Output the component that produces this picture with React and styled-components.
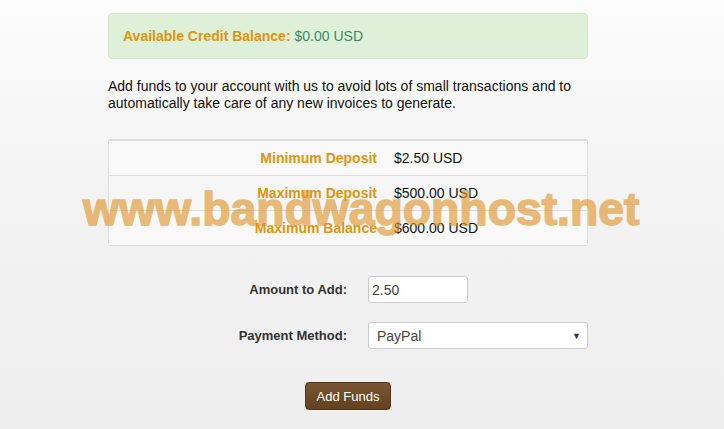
import styled, { createGlobalStyle } from "styled-components";

const GlobalStyle = createGlobalStyle`
  html, body {
    margin: 0;
    padding: 0;
  }
  body {
    font-family: "Liberation Sans", Arial, sans-serif;
    font-size: 14px;
    color: #111;
    background: linear-gradient(to bottom, #fcfcfc 0%, #f3f3f3 45%, #eeeeee 100%);
    min-height: 429px;
  }
`;

const Page = styled.div`
  position: relative;
  width: 724px;
  height: 429px;
  overflow: hidden;
`;

const Content = styled.div`
  width: 480px;
  margin: 0 auto 0 108px;
  padding-top: 13px;
`;

const Alert = styled.div`
  background: #dff0d8;
  border: 1px solid #d6e9c6;
  border-radius: 4px;
  height: 44px;
  padding: 0 14px;
  display: flex;
  align-items: center;
  font-size: 14px;
`;

const AlertLabel = styled.strong`
  color: #e0940f;
  margin-right: 4px;
`;

const AlertValue = styled.span`
  color: #3c8a6a;
`;

const Intro = styled.p`
  margin: 19px 0 0;
  line-height: 16.5px;
  font-size: 14px;
  color: #111;
`;

const Table = styled.div`
  margin-top: 28px;
  border: 1px solid #dddddd;
  border-top: 2px solid #dcdcdc;
  border-radius: 3px;
  background: #f9f9f9;
`;

const Row = styled.div`
  display: grid;
  grid-template-columns: 277px 1fr;
  height: 34px;
  align-items: center;
  border-top: ${(p) => (p.$first ? "none" : "1px solid #dddddd")};
  background: ${(p) => (p.$alt ? "#f6f6f6" : "#f9f9f9")};
`;

const RowLabel = styled.div`
  text-align: right;
  font-weight: bold;
  color: #e0940f;
  padding-right: 9px;
`;

const RowValue = styled.div`
  padding-left: 8px;
  color: #111;
`;

const Form = styled.div`
  margin-top: 30px;
  display: grid;
  grid-template-columns: 260px 1fr;
  row-gap: 19px;
  align-items: center;
`;

const FieldLabel = styled.label`
  text-align: right;
  font-weight: bold;
  font-size: 13px;
  color: #333;
  padding-right: 21px;
`;

const Input = styled.div`
  box-sizing: border-box;
  width: ${(p) => p.$width}px;
  height: 27px;
  background: #fff;
  border: 1px solid #cccccc;
  border-radius: 3px;
  display: flex;
  align-items: center;
  justify-content: space-between;
  padding: 0 6px 0 ${(p) => p.$pad}px;
  font-size: 14px;
  color: #444;
`;

const Caret = styled.span`
  font-size: 9px;
  color: #333;
`;

const Actions = styled.div`
  display: flex;
  justify-content: center;
  margin-top: 33px;
`;

const Button = styled.button`
  width: 86px;
  height: 28px;
  border: 1px solid #4e3419;
  border-radius: 4px;
  background: linear-gradient(to bottom, #7a5534 0%, #62421f 100%);
  color: #fff;
  font-family: "Liberation Sans", Arial, sans-serif;
  font-size: 13px;
  padding: 0;
  cursor: pointer;
`;

const Watermark = styled.div`
  position: absolute;
  left: 83px;
  top: 183px;
  font-family: "Liberation Sans", Arial, sans-serif;
  font-weight: bold;
  font-size: 46.3px;
  line-height: 52px;
  color: #e0962c;
  -webkit-text-stroke: 1.6px #e0962c;
  opacity: 0.63;
  white-space: nowrap;
  pointer-events: none;
`;

const limits = [
  { label: "Minimum Deposit", value: "$2.50 USD" },
  { label: "Maximum Deposit", value: "$500.00 USD" },
  { label: "Maximum Balance", value: "$600.00 USD" },
];

export default function App() {
  return (
    <>
      <GlobalStyle />
      <Page>
        <Content>
          <Alert>
            <AlertLabel>Available Credit Balance:</AlertLabel>
            <AlertValue>$0.00 USD</AlertValue>
          </Alert>
          <Intro>
            Add funds to your account with us to avoid lots of small transactions and to
            automatically take care of any new invoices to generate.
          </Intro>
          <Table>
            {limits.map((row, i) => (
              <Row key={row.label} $first={i === 0} $alt={i === 1}>
                <RowLabel>{row.label}</RowLabel>
                <RowValue>{row.value}</RowValue>
              </Row>
            ))}
          </Table>
          <Form>
            <FieldLabel>Amount to Add:</FieldLabel>
            <Input $width={100} $pad={3}>2.50</Input>
            <FieldLabel>Payment Method:</FieldLabel>
            <Input $width={220} $pad={8}>
              PayPal
              <Caret>▼</Caret>
            </Input>
          </Form>
          <Actions>
            <Button>Add Funds</Button>
          </Actions>
        </Content>
        <Watermark>www.bandwagonhost.net</Watermark>
      </Page>
    </>
  );
}
